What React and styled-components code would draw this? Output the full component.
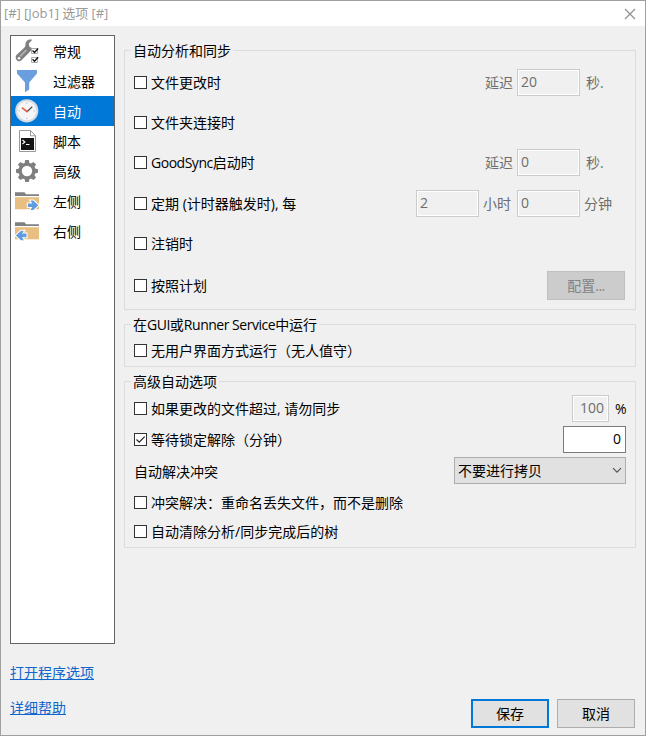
import React from 'react'
import styled, { createGlobalStyle } from 'styled-components'

function App() {
  return (
    <>
    <GlobalStyle />
    <Window>
      <TitleBar>
        <Title>[#] [Job1] 选项 [#]</Title>
        <CloseIcon />
      </TitleBar>
      <Body>
        <Side>
          <Menu>
            {menu.map(({ label, Icon, active }) => (
              <MenuItem key={label} $active={active}>
                <Icon />
                <MenuText>{label}</MenuText>
              </MenuItem>
            ))}
          </Menu>
          <SideLink href="#options">打开程序选项</SideLink>
          <SideLink href="#help">详细帮助</SideLink>
        </Side>
        <Main>
          <Group $height={260}>
            <Legend>自动分析和同步</Legend>
            <Row $top={8}>
              <Check label="文件更改时" />
              <Muted $right={4}>延迟</Muted>
              <Field defaultValue="20" disabled />
              <Muted $left={6} $width={40}>秒.</Muted>
            </Row>
            <Row $top={13}>
              <Check label="文件夹连接时" />
            </Row>
            <Row $top={13}>
              <Check label={<><Latin>GoodSync</Latin>启动时</>} />
              <Muted $right={4}>延迟</Muted>
              <Field defaultValue="0" disabled />
              <Muted $left={6} $width={40}>秒.</Muted>
            </Row>
            <Row $top={14}>
              <Check label="定期 (计时器触发时), 每" />
              <Field defaultValue="2" disabled />
              <Muted $left={4} $right={6}>小时</Muted>
              <Field defaultValue="0" disabled />
              <Muted $left={4} $width={42}>分钟</Muted>
            </Row>
            <Row $top={13}>
              <Check label="注销时" />
            </Row>
            <Row $top={15}>
              <Check label="按照计划" />
              <Button disabled>配置<Latin>...</Latin></Button>
            </Row>
          </Group>

          <Group $height={43} $top={14}>
            <Legend>在<Latin>GUI</Latin>或<Latin>Runner Service</Latin>中运行</Legend>
            <Row $top={2}>
              <Check label="无用户界面方式运行（无人值守）" />
            </Row>
          </Group>

          <Group $height={167} $top={14}>
            <Legend>高级自动选项</Legend>
            <Row $top={3}>
              <Check label="如果更改的文件超过, 请勿同步" />
              <Field $width={37} $align="right" defaultValue="100" disabled />
              <Percent>%</Percent>
            </Row>
            <Row $top={4}>
              <Check label="等待锁定解除（分钟）" checked />
              <Field $align="right" defaultValue="0" />
            </Row>
            <Row $top={4}>
              <Text>自动解决冲突</Text>
              <Select>
                不要进行拷贝
                <Chevron />
              </Select>
            </Row>
            <Row $top={5}>
              <Check label="冲突解决：重命名丢失文件，而不是删除" />
            </Row>
            <Row $top={2}>
              <Check label="自动清除分析/同步完成后的树" />
            </Row>
          </Group>

          <Footer>
            <Button $primary>保存</Button>
            <Button>取消</Button>
          </Footer>
        </Main>
      </Body>
    </Window>
    </>
  )
}

export default App

function Check({ label, checked }) {
  return (
    <CheckLabel>
      <Box>
        {checked && (
          <svg width="11" height="11" viewBox="0 0 11 11">
            <path d="M1.5 5.5L4.2 8.2L9.7 2.6" fill="none" stroke="#222" strokeWidth="1.2" />
          </svg>
        )}
      </Box>
      <span>{label}</span>
    </CheckLabel>
  )
}

function CloseIcon() {
  return (
    <svg width="12" height="12" viewBox="0 0 12 12">
      <path d="M1 1L11 11M11 1L1 11" stroke="#8c8c8c" strokeWidth="1.1" />
    </svg>
  )
}

function Chevron() {
  return (
    <svg width="10" height="7" viewBox="0 0 10 7">
      <path d="M1 1.2L5 5.2L9 1.2" fill="none" stroke="#505050" strokeWidth="1.1" />
    </svg>
  )
}

function WrenchIcon() {
  return (
    <svg width="30" height="30" viewBox="0 0 30 30">
      <path d="M20.3 3.8C17 2.6 13.6 4.8 13.5 8.4C13.4 10 13 11 12 12L4.7 18.8C1.8 21.8 5.8 27.4 9.2 24.6L17.4 16.2C18.6 15 20 14 20.3 12.2L17.4 10.8L16.8 7.4Z" fill="#7f7f7f" />
      <path d="M8 20.5L14.4 14" stroke="#b5b5b5" strokeWidth="1.6" />
      <circle cx="7" cy="22.2" r="1.3" fill="#fff" />
      <path d="M19.5 12.5h6v5h-6zM19.5 21.5h6v5h-6z" fill="#fff" stroke="#aaa" />
      <path d="M20.5 14.5l2 2l3.6-4M20.5 23.2l2 2l3.6-4" fill="none" stroke="#111" strokeWidth="1.3" />
    </svg>
  )
}

function FunnelIcon() {
  return (
    <svg width="30" height="30" viewBox="0 0 30 30">
      <path d="M5 4H25V7.5L17.2 16.5V23.5L13 26.3V16.5L5 7.5Z" fill="#6a9fdf" />
    </svg>
  )
}

function ClockIcon() {
  return (
    <svg width="30" height="30" viewBox="0 0 30 30">
      <circle cx="14.8" cy="14.8" r="11.6" fill="#d5dae0" />
      <circle cx="14.8" cy="14.8" r="9.6" fill="#f4f6f8" />
      <path d="M14.8 6.5v1.5M14.8 21.6v1.5M6.5 14.8h1.5M21.6 14.8h1.5" stroke="#b9c4d0" />
      <path d="M15 15.8L20.3 10.6" stroke="#444" strokeWidth="1.2" />
      <path d="M10 11.7L15.5 16" stroke="#e8623c" strokeWidth="1.7" />
    </svg>
  )
}

function ScriptIcon() {
  return (
    <svg width="30" height="30" viewBox="0 0 30 30">
      <path d="M7.5 4.5H18.5L23.5 9.8V25.5H7.5Z" fill="#fff" stroke="#999" />
      <path d="M18.5 4.5V9.8H23.5" fill="none" stroke="#999" />
      <path d="M9 12H22V24H9Z" fill="#151515" />
      <path d="M10.5 14l2.3 2l-2.3 2M14 18.5h3.5" fill="none" stroke="#fff" strokeWidth="1.2" />
    </svg>
  )
}

function GearIcon() {
  return (
    <svg width="30" height="30" viewBox="0 0 30 30">
      <circle cx="15" cy="15" r="6.9" fill="none" stroke="#7f7f7f" strokeWidth="3.4" />
      {[0, 45, 90, 135, 180, 225, 270, 315].map((a) => (
        <path key={a} d="M13.2 4h3.6l.7 3.4h-5z" fill="#7f7f7f" transform={`rotate(${a} 15 15)`} />
      ))}
    </svg>
  )
}

function Folder({ children }) {
  return (
    <svg width="30" height="30" viewBox="0 0 30 30">
      <path d="M3 6.3H12.5L14 8.2H27V10H3Z" fill="#808080" />
      <path d="M3 11.2H27V23.3H3Z" fill="#e8bf80" />
      {children}
    </svg>
  )
}

function FolderRightIcon() {
  return (
    <Folder>
      <path d="M15.8 17.4H20.3L18.4 14.5H21.3L26.4 19.2L21.3 24H18.4L20.3 21H15.8Z" fill="#619ce0" stroke="#fff" strokeWidth="2" paintOrder="stroke" />
    </Folder>
  )
}

function FolderLeftIcon() {
  return (
    <Folder>
      <path d="M14.5 17.6H10L11.9 14.7H9L3.9 19.4L9 24.2H11.9L10 21.2H14.5Z" fill="#619ce0" stroke="#fff" strokeWidth="2" paintOrder="stroke" />
    </Folder>
  )
}

const menu = [
  { label: '常规', Icon: WrenchIcon },
  { label: '过滤器', Icon: FunnelIcon },
  { label: '自动', Icon: ClockIcon, active: true },
  { label: '脚本', Icon: ScriptIcon },
  { label: '高级', Icon: GearIcon },
  { label: '左侧', Icon: FolderRightIcon },
  { label: '右侧', Icon: FolderLeftIcon },
]

const GlobalStyle = createGlobalStyle`
*{
    box-sizing:border-box;
}

body{
    margin:0;
    overflow:hidden;
    font-family:"Open Sans","Noto Sans CJK SC",sans-serif;
    font-size:14px;
    line-height:20px;
    color:#000;
}

svg{
    display:block;
    flex-shrink:0;
}
`

const Window = styled.div`
display:flex;
flex-direction:column;
width:646px;
height:736px;
background:#f0f0f0;
border:1px solid #a0a0a0;
`

const TitleBar = styled.div`
display:flex;
align-items:center;
justify-content:space-between;
height:25px;
padding:0 9px 0 3px;
background:#fff;
`

const Title = styled.div`
padding-bottom:2px;
color:#999;
font-size:13px;
letter-spacing:-0.05px;
white-space:nowrap;
`

const Body = styled.div`
display:flex;
flex:1;
padding:9px 9px 7px 9px;
`

const Side = styled.div`
display:flex;
flex-direction:column;
align-items:flex-start;
width:105px;
margin-right:9px;
`

const Menu = styled.div`
width:105px;
height:609px;
margin-bottom:4px;
background:#fff;
border:1px solid #646464;
`

const MenuItem = styled.div`
display:flex;
align-items:center;
gap:11px;
height:30px;
padding-left:1px;
color:${({ $active }) => ($active ? '#fff' : '#000')};
background:${({ $active }) => ($active ? '#0078d7' : 'transparent')};
`

const MenuText = styled.span`
padding-top:2px;
`

const SideLink = styled.a`
margin-top:15px;
color:#0f66cc;
text-decoration:underline;
text-underline-offset:1px;
`

const Main = styled.div`
display:flex;
flex-direction:column;
flex:1;
padding-top:15px;
`

const Group = styled.section`
width:512px;
height:${({ $height }) => $height}px;
margin-top:${({ $top }) => $top || 0}px;
padding:0 9px;
border:1px solid #dcdcdc;
`

const Legend = styled.div`
width:fit-content;
height:20px;
margin:-10px 0 0 -3px;
padding:0 2px;
background:#f0f0f0;
white-space:nowrap;
`

const Latin = styled.span`
letter-spacing:-0.48px;
`

const Row = styled.div`
display:flex;
align-items:center;
height:27px;
margin-top:${({ $top }) => $top || 0}px;
`

const CheckLabel = styled.div`
display:flex;
align-items:center;
gap:4px;
margin-right:auto;
white-space:nowrap;
`

const Box = styled.span`
width:13px;
height:13px;
background:#fff;
border:1px solid #333;
`

const Text = styled.div`
margin-right:auto;
padding-top:2px;
`

const Muted = styled.span`
width:${({ $width }) => ($width ? $width + 'px' : 'auto')};
margin-left:${({ $left }) => $left || 0}px;
margin-right:${({ $right }) => $right || 0}px;
color:#6d6d6d;
`

const Percent = styled.span`
width:11px;
margin-left:6px;
`

const Field = styled.input`
width:${({ $width }) => $width || 63}px;
height:27px;
padding:0 4px 2px 3px;
font:inherit;
text-align:${({ $align }) => $align || 'left'};
color:#000;
background:#fff;
border:1px solid #7a7a7a;
border-radius:0;
outline:none;

&:disabled{
    color:#6d6d6d;
    background:#f0f0f0;
    border-color:#ccc;
    box-shadow:inset 0 0 0 1px #fff;
}
`

const Select = styled.div`
display:flex;
align-items:center;
justify-content:space-between;
width:172px;
height:27px;
padding:0 3px;
background:#e1e1e1;
border:1px solid #adadad;
`

const Button = styled.button`
width:78px;
height:29px;
padding:0;
font:inherit;
color:#000;
background:#e1e1e1;
border:${({ $primary }) => ($primary ? '2px solid #0078d7' : '1px solid #adadad')};
border-radius:0;

&:disabled{
    margin-right:1px;
    color:#838383;
    background:#ccc;
    border-color:#bfbfbf;
}
`

const Footer = styled.div`
display:flex;
justify-content:flex-end;
gap:8px;
margin-top:auto;
padding-right:1px;
`
